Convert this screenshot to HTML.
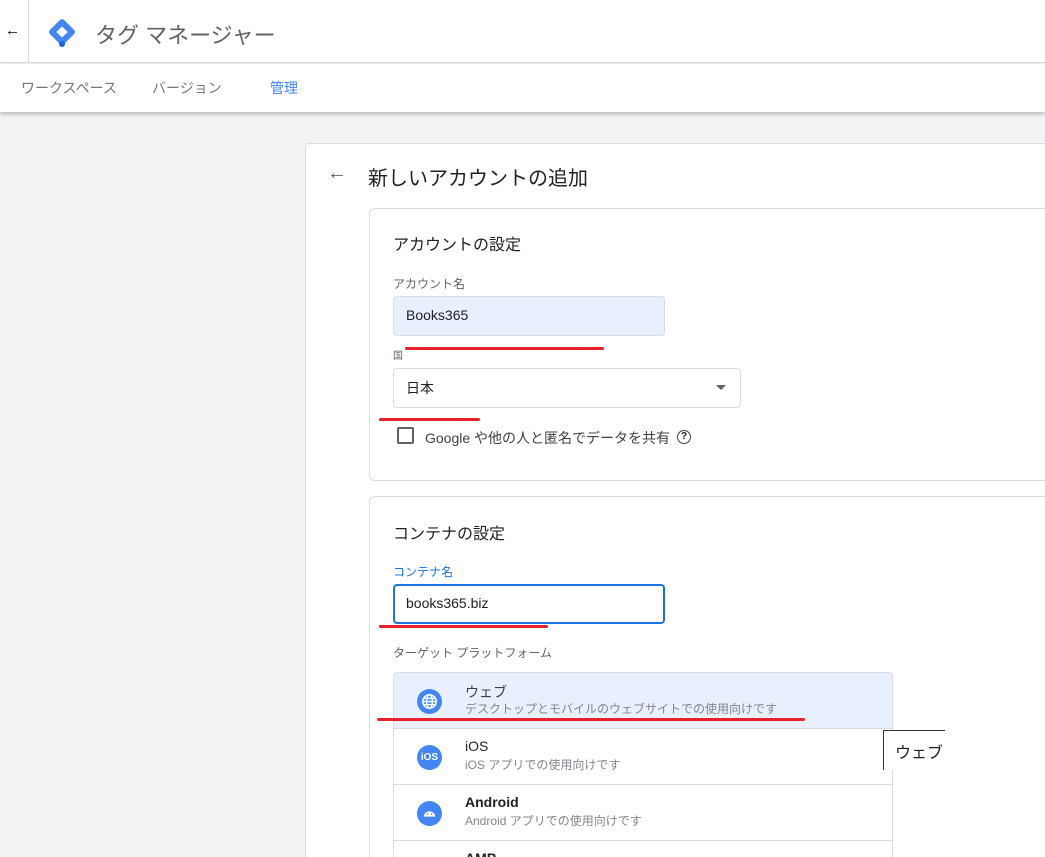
<!DOCTYPE html><html><head><meta charset="utf-8"><style>
*{box-sizing:border-box;margin:0;padding:0}
html,body{width:1045px;height:857px;overflow:hidden}
body{background:#f1f3f4;font-family:"Liberation Sans","Noto Sans CJK JP",sans-serif;position:relative;color:#202124}
.a{position:absolute}
</style></head><body>
<div class="a" style="left:0;top:0;width:1045px;height:63px;background:#fff;border-bottom:1px solid #dadce0"></div>
<div class="a" style="left:28px;top:0;width:1px;height:63px;background:#dadce0"></div>
<div class="a" style="left:5px;top:22px;font-size:15px;color:#000">←</div>
<svg class="a" style="left:46px;top:16px" width="32" height="32" viewBox="0 0 32 32"><rect x="6" y="6" width="20" height="20" rx="3" transform="rotate(45 16 16)" fill="#4285f4"/><rect x="12" y="12" width="8" height="8" transform="rotate(45 16 16)" fill="#fff"/><circle cx="16" cy="28" r="3" fill="#1967d2"/></svg>
<div class="a" style="left:95px;top:18px;font-size:22px;color:#5f6368">タグ マネージャー</div>
<div class="a" style="left:0;top:64px;width:1045px;height:48px;background:#fff;box-shadow:0 2px 4px rgba(0,0,0,.25)"></div>
<div class="a" style="left:21px;top:78px;font-size:14px;color:#757575">ワークスペース</div>
<div class="a" style="left:152px;top:78px;font-size:14px;color:#757575">バージョン</div>
<div class="a" style="left:270px;top:78px;font-size:14px;color:#4285f4">管理</div>
<div class="a" style="left:305px;top:143px;width:760px;height:740px;background:#fff;border:1px solid #dadce0;border-radius:4px"></div>
<div class="a" style="left:327px;top:162px;font-size:20px;color:#5f6368">←</div>
<div class="a" style="left:368px;top:162px;font-size:20px;color:#202124">新しいアカウントの追加</div>
<div class="a" style="left:369px;top:208px;width:700px;height:273px;border:1px solid #dadce0;border-radius:6px"></div>
<div class="a" style="left:393px;top:231px;font-size:16px">アカウントの設定</div>
<div class="a" style="left:393px;top:275px;font-size:12px;color:#5f6368">アカウント名</div>
<div class="a" style="left:393px;top:296px;width:272px;height:40px;background:#e8f0fe;border:1px solid #dadce0;border-radius:4px;font-size:14px;padding:10px 12px">Books365</div>
<div class="a" style="left:405px;top:347px;width:199px;height:3px;background:#e8202a;border-radius:2px"></div>
<div class="a" style="left:393px;top:347px;font-size:10px;color:#5f6368">国</div>
<div class="a" style="left:393px;top:368px;width:348px;height:40px;border:1px solid #dadce0;border-radius:4px;font-size:14px;padding:9px 12px">日本</div>
<div class="a" style="left:716px;top:385px;border:5px solid transparent;border-top-color:#5f6368"></div>
<div class="a" style="left:379px;top:418px;width:101px;height:3px;background:#e8202a;border-radius:2px"></div>
<div class="a" style="left:397px;top:427px;width:17px;height:17px;border:2px solid #5f6368;border-radius:2px"></div>
<div class="a" style="left:425px;top:428px;font-size:14px;color:#3c4043">Google や他の人と匿名でデータを共有</div>
<div class="a" style="left:677px;top:430px;width:14px;height:14px;border:1.5px solid #3c4043;border-radius:50%;font-size:10px;text-align:center;line-height:11px;font-weight:bold">?</div>
<div class="a" style="left:369px;top:496px;width:700px;height:400px;border:1px solid #dadce0;border-radius:6px"></div>
<div class="a" style="left:393px;top:520px;font-size:16px">コンテナの設定</div>
<div class="a" style="left:393px;top:563px;font-size:12px;color:#1a73e8">コンテナ名</div>
<div class="a" style="left:393px;top:584px;width:272px;height:40px;border:2px solid #1a73e8;border-radius:4px;font-size:14px;padding:9px 11px">books365.biz</div>
<div class="a" style="left:379px;top:625px;width:169px;height:3px;background:#e8202a;border-radius:2px"></div>
<div class="a" style="left:393px;top:644px;font-size:12px;color:#5f6368">ターゲット プラットフォーム</div>
<div class="a" style="left:393px;top:672px;width:500px;height:200px;border:1px solid #dadce0;border-radius:4px;overflow:hidden;background:#fff">
 <div style="height:56px;background:#e8f0fe;border-bottom:1px solid #dadce0"></div>
 <div style="height:56px;border-bottom:1px solid #dadce0"></div>
 <div style="height:56px;border-bottom:1px solid #dadce0"></div>
</div>
<svg class="a" style="left:417px;top:689px" width="25" height="25" viewBox="0 0 24 24"><circle cx="12" cy="12" r="12" fill="#4285f4"/><g fill="none" stroke="#fff" stroke-width="1.4"><circle cx="12" cy="12" r="6.5"/><ellipse cx="12" cy="12" rx="2.8" ry="6.5"/><path d="M5.5 12h13M6.5 9h11M6.5 15h11"/></g></svg>
<div class="a" style="left:465px;top:682px;font-size:14px;color:#3c4043">ウェブ</div>
<div class="a" style="left:465px;top:700px;font-size:12px;color:#80868b">デスクトップとモバイルのウェブサイトでの使用向けです</div>
<div class="a" style="left:377px;top:718px;width:428px;height:3px;background:#e8202a;border-radius:2px"></div>
<div class="a" style="left:417px;top:745px;width:25px;height:25px;border-radius:50%;background:#4285f4;color:#fff;font-size:10px;font-weight:bold;text-align:center;line-height:25px">iOS</div>
<div class="a" style="left:465px;top:738px;font-size:14px;color:#202124">iOS</div>
<div class="a" style="left:465px;top:756px;font-size:12px;color:#80868b">iOS アプリでの使用向けです</div>
<svg class="a" style="left:417px;top:801px" width="25" height="25" viewBox="0 0 24 24"><circle cx="12" cy="12" r="12" fill="#4285f4"/><path d="M6.5 15a5.5 5 0 0 1 11 0z" fill="#fff"/><circle cx="10" cy="12.5" r=".8" fill="#4285f4"/><circle cx="14" cy="12.5" r=".8" fill="#4285f4"/></svg>
<div class="a" style="left:465px;top:794px;font-size:14px;color:#202124;font-weight:bold">Android</div>
<div class="a" style="left:465px;top:812px;font-size:12px;color:#80868b">Android アプリでの使用向けです</div>
<div class="a" style="left:465px;top:850px;font-size:14px;font-weight:bold">AMP</div>
<div class="a" style="left:883px;top:730px;width:62px;height:40px;background:#fff;border-left:1px solid #333;border-top:1px solid #333;font-size:16px;padding:8px 0 0 11px">ウェブ</div>
</body></html>
